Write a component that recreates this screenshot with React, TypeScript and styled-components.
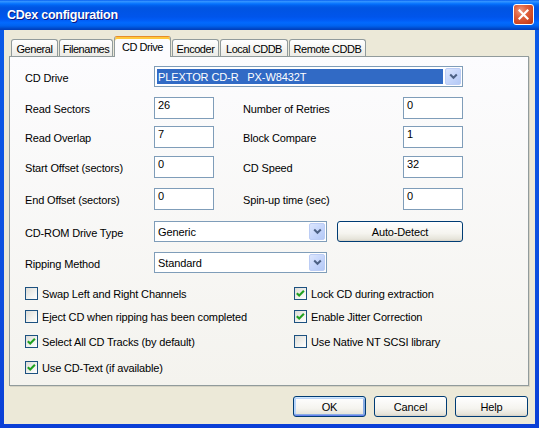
import React from "react";
import styled, { createGlobalStyle } from "styled-components";

const Global = createGlobalStyle`
  html, body { margin: 0; padding: 0; background: #ECE9D8; }
  body { font-family: "Liberation Sans", Arial, sans-serif; font-size: 11px; color: #000; }
  * { box-sizing: border-box; }
`;

const Window = styled.div`
  width: 539px;
  height: 428px;
  display: flex;
  flex-direction: column;
  background: linear-gradient(to bottom, #0A5BE8 0%, #0D4EDE 70%, #0A3FD6 100%);
`;

const TitleBar = styled.div`
  height: 30px;
  flex: none;
  display: flex;
  align-items: center;
  justify-content: space-between;
  padding: 0 5px 1px 7px;
  background: linear-gradient(
    to bottom,
    #0058ee 0%,
    #3593ff 4%,
    #288eff 7%,
    #127dff 10%,
    #036ffc 14%,
    #0262ee 18%,
    #0057e5 24%,
    #0054e3 30%,
    #0055eb 56%,
    #005bf5 66%,
    #026afe 76%,
    #0062ef 86%,
    #0052d6 92%,
    #0046c4 96%,
    #003dbb 100%
  );
`;

const Title = styled.span`
  color: #fff;
  font-family: "Liberation Sans", Arial, sans-serif;
  font-weight: bold;
  font-size: 12.5px;
  letter-spacing: -0.25px;
  text-shadow: 1px 1px 0 #0a1883;
`;

const CloseButton = styled.div`
  width: 21px;
  height: 21px;
  border: 1px solid #fff;
  border-radius: 3px;
  display: flex;
  align-items: center;
  justify-content: center;
  background: radial-gradient(circle at 35% 30%, #f09a80 0%, #e0623f 35%, #cc4420 75%, #b23413 100%);
`;

const Body = styled.div`
  flex: 1;
  margin: 0 4px 4px 4px;
  background: #ece9d8;
  padding: 6px 6px 0 5px;
  display: flex;
  flex-direction: column;
`;

const TabStrip = styled.div`
  position: relative;
  z-index: 1;
  height: 21px;
  margin-bottom: -1px;
  padding-left: 2px;
  display: flex;
  align-items: flex-end;
  gap: 1px;
`;

const Tab = styled.div<{ $w: number; $active?: boolean }>`
  width: ${(p) => p.$w}px;
  height: ${(p) => (p.$active ? 21 : 17)}px;
  margin-bottom: ${(p) => (p.$active ? 0 : 1)}px;
  display: flex;
  align-items: center;
  justify-content: center;
  padding-top: ${(p) => (p.$active ? 0 : 1)}px;
  white-space: nowrap;
  letter-spacing: -0.45px;
  border: 1px solid #919b9c;
  border-bottom: none;
  border-radius: 3px 3px 0 0;
  background: ${(p) =>
    p.$active ? "#fcfcfe" : "linear-gradient(to bottom, #ffffff 0%, #f6f6f3 50%, #ecebe6 100%)"};
  ${(p) =>
    p.$active &&
    `border-top: 1px solid #e68b2c; box-shadow: inset 0 2px 0 #ffc83c;`}
`;

const Panel = styled.div`
  width: 520px;
  height: 330px;
  border: 1px solid #919b9c;
  box-shadow: 1px 1px 0 #d6d3c4;
  background: linear-gradient(to bottom, #fcfcfe 0%, #f4f3ee 100%);
  padding: 9px 0 0 15px;
  display: flex;
  flex-direction: column;
`;

const Row = styled.div<{ $mt?: number }>`
  display: flex;
  align-items: center;
  margin-top: ${(p) => p.$mt ?? 0}px;
`;

const EditRow = styled(Row)`
  gap: 29px;
`;

const Field = styled.div`
  display: flex;
  align-items: center;
`;

const Label = styled.span<{ $w: number }>`
  width: ${(p) => p.$w}px;
  flex: none;
  white-space: nowrap;
  letter-spacing: -0.15px;
  padding-top: 2px;
`;

const Edit = styled.div`
  width: 60px;
  height: 22px;
  border: 1px solid #7f9db9;
  background: #fff;
  padding: 1px 0 0 3px;
  display: flex;
  align-items: flex-start;
  font-size: 11px;
`;

const Combo = styled.div<{ $w: number }>`
  width: ${(p) => p.$w}px;
  height: 21px;
  border: 1px solid #7f9db9;
  background: #fff;
  display: flex;
  align-items: stretch;
  padding: 1px;
`;

const ComboValue = styled.div<{ $selected?: boolean }>`
  flex: 1;
  margin: 1px 2px 1px 1px;
  padding-left: 1px;
  display: flex;
  align-items: center;
  white-space: pre;
  letter-spacing: -0.1px;
  background: ${(p) => (p.$selected ? "#316ac5" : "transparent")};
  color: ${(p) => (p.$selected ? "#fff" : "#000")};
`;

const DropButton = styled.div`
  width: 16px;
  flex: none;
  border: 1px solid #bccdf5;
  border-radius: 2px;
  background: linear-gradient(135deg, #dce6fd 0%, #c6d6fb 50%, #b4c9f6 100%);
  display: flex;
  align-items: center;
  justify-content: center;
`;

const Button = styled.div<{ $w: number; $default?: boolean; $ml?: number }>`
  width: ${(p) => p.$w}px;
  height: 21px;
  margin-left: ${(p) => p.$ml ?? 0}px;
  border: 1px solid #003c74;
  border-radius: 3px;
  background: linear-gradient(to bottom, #ffffff 0%, #f5f4ef 60%, #e6e4da 90%, #d6d0c5 100%);
  display: flex;
  align-items: center;
  justify-content: center;
  letter-spacing: -0.15px;
  box-shadow: ${(p) =>
    p.$default
      ? "inset 0 1px 0 #cee7ff, inset 0 -1px 0 #6982ee, inset 1px 0 0 #b8d6fb, inset -1px 0 0 #89ade4, inset 0 2px 0 #bcd4f6, inset 0 -2px 0 #89ade4, inset 2px 0 0 #b8d6fb, inset -2px 0 0 #89ade4"
      : "none"};
`;

const CheckGrid = styled.div`
  margin-top: 14px;
  display: grid;
  grid-template-columns: 269px 1fr;
  grid-template-rows: 23px 25px 26px 13px;
`;

const CheckItem = styled.div`
  display: flex;
  align-items: center;
  height: 13px;
  gap: 4px;
  white-space: nowrap;
  letter-spacing: -0.15px;
`;

const CheckBoxSquare = styled.span`
  width: 13px;
  height: 13px;
  flex: none;
  border: 1px solid #1c5180;
  background: linear-gradient(135deg, #dcdcd7 0%, #f2f2ef 60%, #ffffff 100%);
  display: flex;
  align-items: center;
  justify-content: center;
`;

const CheckText = styled.span`
  padding-top: 1px;
`;

const ButtonRow = styled.div`
  margin-top: 10px;
  display: flex;
  justify-content: flex-end;
  gap: 8px;
  padding-right: 1px;
`;

const Chevron = () => (
  <svg width="9" height="7" viewBox="0 0 9 7">
    <path d="M1.2 1.5 L4.5 4.8 L7.8 1.5" fill="none" stroke="#4d6185" strokeWidth="2" />
  </svg>
);

const CheckMark = () => (
  <svg width="11" height="11" viewBox="0 0 11 11">
    <path d="M1.8 5.2 L4.2 7.6 L8.9 2.8" fill="none" stroke="#21a121" strokeWidth="2.1" />
  </svg>
);

const CheckBox = ({ checked, label }: { checked?: boolean; label: string }) => (
  <CheckItem>
    <CheckBoxSquare>{checked && <CheckMark />}</CheckBoxSquare>
    <CheckText>{label}</CheckText>
  </CheckItem>
);

const ComboBox = ({ w, value, selected }: { w: number; value: string; selected?: boolean }) => (
  <Combo $w={w}>
    <ComboValue $selected={selected}>{value}</ComboValue>
    <DropButton>
      <Chevron />
    </DropButton>
  </Combo>
);

const tabs = [
  { name: "General", w: 47 },
  { name: "Filenames", w: 54 },
  { name: "CD Drive", w: 57, active: true },
  { name: "Encoder", w: 47 },
  { name: "Local CDDB", w: 68 },
  { name: "Remote CDDB", w: 77 },
];

const edits = [
  { l: "Read Sectors", lv: "26", r: "Number of Retries", rv: "0", mt: 10 },
  { l: "Read Overlap", lv: "7", r: "Block Compare", rv: "1", mt: 7 },
  { l: "Start Offset (sectors)", lv: "0", r: "CD Speed", rv: "32", mt: 8 },
  { l: "End Offset (sectors)", lv: "0", r: "Spin-up time (sec)", rv: "0", mt: 10 },
];

export default function App() {
  return (
    <>
      <Global />
      <Window>
        <TitleBar>
          <Title>CDex configuration</Title>
          <CloseButton>
            <svg width="11" height="11" viewBox="0 0 11 11">
              <path d="M1.5 1.5 L9.5 9.5 M9.5 1.5 L1.5 9.5" stroke="#fff" strokeWidth="2.2" strokeLinecap="square" />
            </svg>
          </CloseButton>
        </TitleBar>
        <Body>
          <TabStrip>
            {tabs.map((t) => (
              <Tab key={t.name} $w={t.w} $active={t.active}>
                {t.name}
              </Tab>
            ))}
          </TabStrip>
          <Panel>
            <Row>
              <Label $w={129}>CD Drive</Label>
              <ComboBox w={309} value={"PLEXTOR CD-R   PX-W8432T"} selected />
            </Row>
            {edits.map((e) => (
              <EditRow key={e.l} $mt={e.mt}>
                <Field>
                  <Label $w={129}>{e.l}</Label>
                  <Edit>{e.lv}</Edit>
                </Field>
                <Field>
                  <Label $w={160}>{e.r}</Label>
                  <Edit>{e.rv}</Edit>
                </Field>
              </EditRow>
            ))}
            <Row $mt={11}>
              <Label $w={129}>CD-ROM Drive Type</Label>
              <ComboBox w={173} value="Generic" />
              <Button $w={126} $ml={10}>Auto-Detect</Button>
            </Row>
            <Row $mt={10}>
              <Label $w={129}>Ripping Method</Label>
              <ComboBox w={173} value="Standard" />
            </Row>
            <CheckGrid>
              <CheckBox label="Swap Left and Right Channels" />
              <CheckBox checked label="Lock CD during extraction" />
              <CheckBox label="Eject CD when ripping has been completed" />
              <CheckBox checked label="Enable Jitter Correction" />
              <CheckBox checked label="Select All CD Tracks (by default)" />
              <CheckBox label="Use Native NT SCSI library" />
              <CheckBox checked label="Use CD-Text (if available)" />
            </CheckGrid>
          </Panel>
          <ButtonRow>
            <Button $w={73} $default>OK</Button>
            <Button $w={73}>Cancel</Button>
            <Button $w={73}>Help</Button>
          </ButtonRow>
        </Body>
      </Window>
    </>
  );
}
